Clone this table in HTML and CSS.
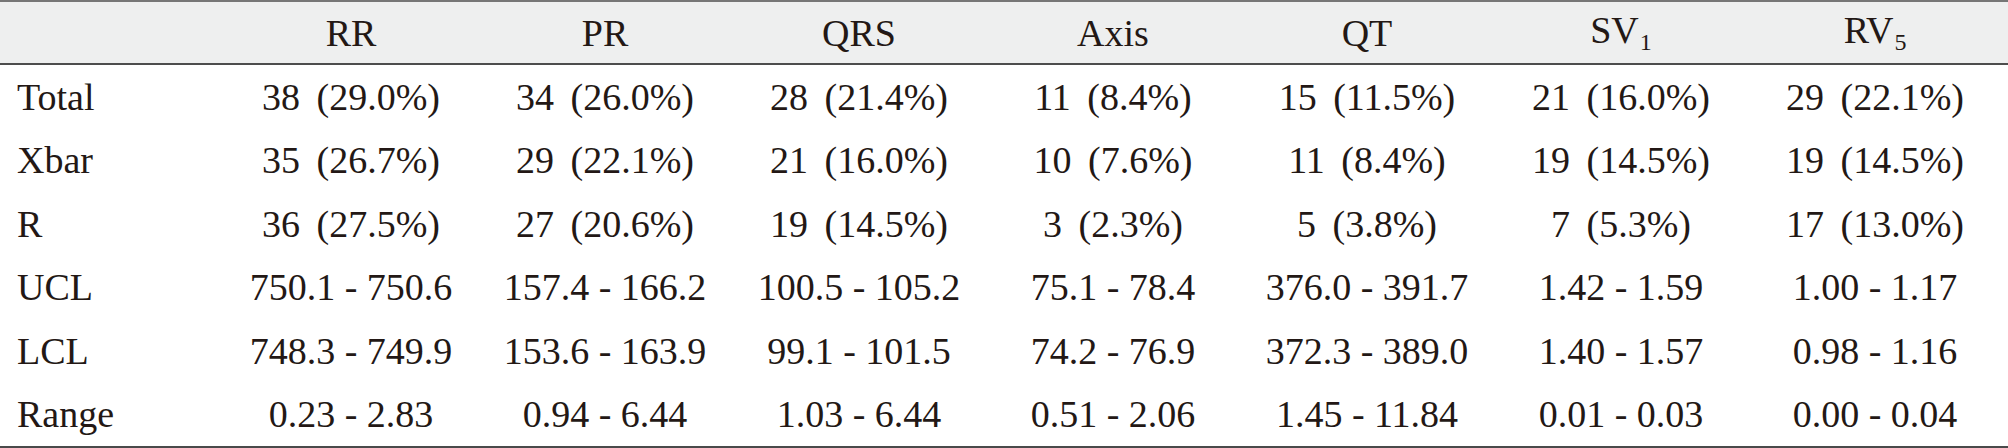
FILE: index.html
```html
<!DOCTYPE html>
<html lang="en">
<head>
<meta charset="utf-8">
<title>Control chart limits</title>
<link rel="stylesheet" href="styles.css">
</head>
<body>
<div class="table">
  <div class="row head">
    <div class="cell label"></div>
    <div class="cell">RR</div>
    <div class="cell">PR</div>
    <div class="cell">QRS</div>
    <div class="cell">Axis</div>
    <div class="cell">QT</div>
    <div class="cell">SV<span class="sub">1</span></div>
    <div class="cell">RV<span class="sub">5</span></div>
  </div>
  <div class="row body first pct">
    <div class="cell label">Total</div>
    <div class="cell">38 (29.0%)</div>
    <div class="cell">34 (26.0%)</div>
    <div class="cell">28 (21.4%)</div>
    <div class="cell">11 (8.4%)</div>
    <div class="cell">15 (11.5%)</div>
    <div class="cell">21 (16.0%)</div>
    <div class="cell">29 (22.1%)</div>
  </div>
  <div class="row body pct">
    <div class="cell label">Xbar</div>
    <div class="cell">35 (26.7%)</div>
    <div class="cell">29 (22.1%)</div>
    <div class="cell">21 (16.0%)</div>
    <div class="cell">10 (7.6%)</div>
    <div class="cell">11 (8.4%)</div>
    <div class="cell">19 (14.5%)</div>
    <div class="cell">19 (14.5%)</div>
  </div>
  <div class="row body pct">
    <div class="cell label">R</div>
    <div class="cell">36 (27.5%)</div>
    <div class="cell">27 (20.6%)</div>
    <div class="cell">19 (14.5%)</div>
    <div class="cell">3 (2.3%)</div>
    <div class="cell">5 (3.8%)</div>
    <div class="cell">7 (5.3%)</div>
    <div class="cell">17 (13.0%)</div>
  </div>
  <div class="row body">
    <div class="cell label">UCL</div>
    <div class="cell">750.1 - 750.6</div>
    <div class="cell">157.4 - 166.2</div>
    <div class="cell">100.5 - 105.2</div>
    <div class="cell">75.1 - 78.4</div>
    <div class="cell">376.0 - 391.7</div>
    <div class="cell">1.42 - 1.59</div>
    <div class="cell">1.00 - 1.17</div>
  </div>
  <div class="row body">
    <div class="cell label">LCL</div>
    <div class="cell">748.3 - 749.9</div>
    <div class="cell">153.6 - 163.9</div>
    <div class="cell">99.1 - 101.5</div>
    <div class="cell">74.2 - 76.9</div>
    <div class="cell">372.3 - 389.0</div>
    <div class="cell">1.40 - 1.57</div>
    <div class="cell">0.98 - 1.16</div>
  </div>
  <div class="row body">
    <div class="cell label">Range</div>
    <div class="cell">0.23 - 2.83</div>
    <div class="cell">0.94 - 6.44</div>
    <div class="cell">1.03 - 6.44</div>
    <div class="cell">0.51 - 2.06</div>
    <div class="cell">1.45 - 11.84</div>
    <div class="cell">0.01 - 0.03</div>
    <div class="cell">0.00 - 0.04</div>
  </div>
</div>
</body>
</html>
```
FILE: styles.css
```css
html, body {
  margin: 0;
  padding: 0;
  background: #ffffff;
}

body {
  width: 2008px;
  height: 448px;
  overflow: hidden;
  font-family: "Liberation Serif", "DejaVu Serif", serif;
  font-size: 38px;
  color: #231815;
}

.table {
  border-top: 2px solid #767676;
  border-bottom: 2px solid #4a4a4a;
}

.row {
  display: grid;
  grid-template-columns: 224px repeat(7, 254px);
  align-items: center;
}

.head {
  height: 61px;
  background: #eeefef;
  border-bottom: 2px solid #4d4d4d;
}

.body {
  height: 63.5px;
}

.cell {
  text-align: center;
  white-space: nowrap;
  line-height: 1;
}

.cell.label {
  text-align: left;
  padding-left: 17px;
}

.pct .cell {
  word-spacing: 7px;
}

.pct .cell.label {
  word-spacing: 0;
}

.sub {
  font-size: 24px;
  vertical-align: -7px;
  margin-left: 1px;
}
```
